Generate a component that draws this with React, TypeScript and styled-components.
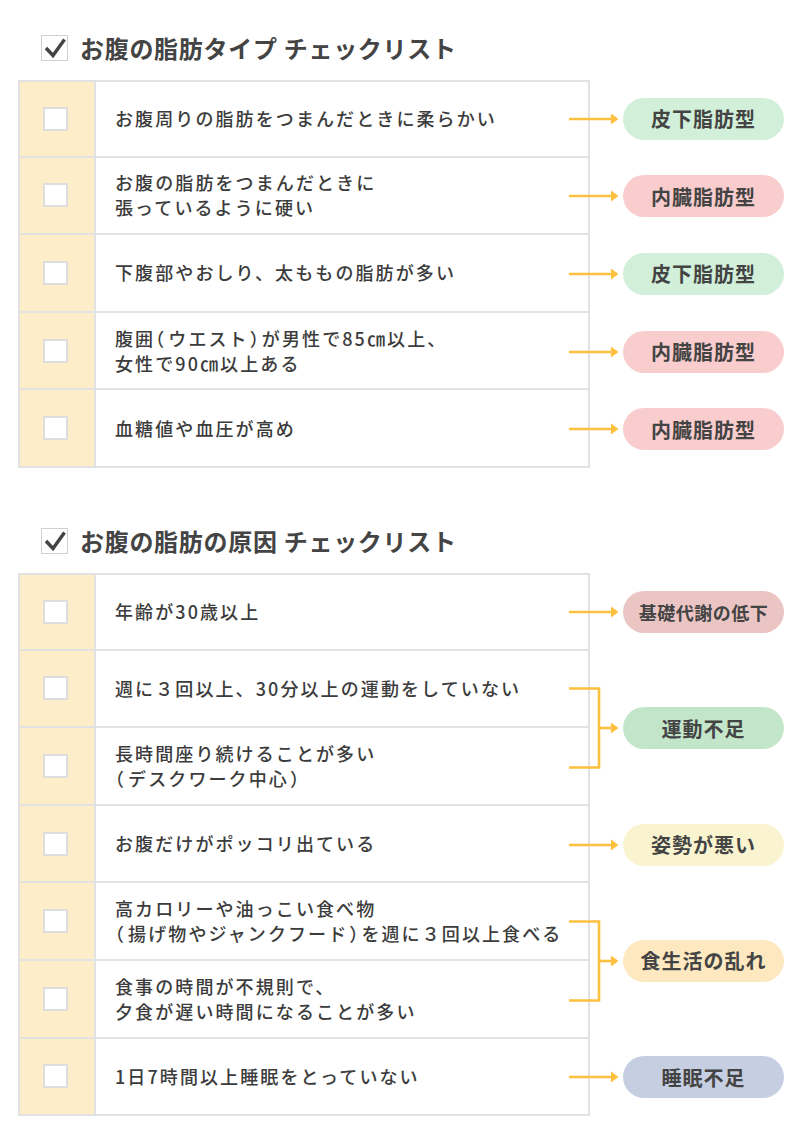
import React from "react";
import styled, { createGlobalStyle } from "styled-components";

const GlobalStyle = createGlobalStyle`
  html, body { margin: 0; padding: 0; background: #ffffff; }
  body { font-family: "Noto Sans CJK JP", "Noto Sans", sans-serif; color: #444444; }
  * { box-sizing: border-box; }
`;

const Page = styled.div`
  width: 800px;
  padding: 35px 0 20px 18px;
`;

const Section = styled.section<{ $gap?: number }>`
  margin-top: ${(p) => p.$gap ?? 0}px;
`;

const TitleRow = styled.h2`
  display: flex;
  align-items: center;
  gap: 12px;
  height: 26px;
  margin: 0 0 19px 23px;
  font-size: 24px;
  font-weight: 700;
  letter-spacing: 0.7px;
  color: #444444;
  line-height: 1;
  white-space: nowrap;
`;

const TitleBox = styled.span`
  display: inline-flex;
  align-items: center;
  justify-content: center;
  width: 27px;
  height: 26px;
  border: 1px solid #d0d0d0;
  background: #ffffff;
  flex: none;
`;

const Grid = styled.div`
  display: grid;
  grid-template-columns: 78px 494px 194px;
  grid-auto-rows: 77.6px;
`;

const CheckCell = styled.div<{ $first?: boolean }>`
  display: flex;
  align-items: center;
  justify-content: center;
  background: #fdedc9;
  border-left: 2px solid #e2e2e2;
  border-right: 2px solid #e2e2e2;
  border-bottom: 2px solid #e2e2e2;
  border-top: ${(p) => (p.$first ? "2px solid #e2e2e2" : "none")};
`;

const Box = styled.span`
  display: block;
  width: 25px;
  height: 24px;
  background: #ffffff;
  border: 2px solid #dedede;
  margin-right: 3px;
`;

const TextCell = styled.div<{ $first?: boolean }>`
  display: flex;
  align-items: center;
  padding-left: 19px;
  border-right: 2px solid #e2e2e2;
  border-bottom: 2px solid #e2e2e2;
  border-top: ${(p) => (p.$first ? "2px solid #e2e2e2" : "none")};
  font-size: 18px;
  font-weight: 500;
  letter-spacing: 2.1px;
  line-height: 25px;
  color: #3c3c3c;
  white-space: nowrap;
`;

const Lines = styled.div`
  display: flex;
  flex-direction: column;
`;

const Paren = styled.span<{ $open?: boolean }>`
  font-feature-settings: "halt" 1;
  margin: ${(p) => (p.$open ? "0 2px 0 0" : "0 1px 0 1px")};
`;

const Annotation = styled.div<{ $span: number }>`
  grid-row: span ${(p) => p.$span};
  grid-column: 3;
  display: flex;
  align-items: center;
  gap: 4px;
  margin-left: -21px;
  position: relative;
  z-index: 1;
`;

const Pill = styled.div<{ $bg: string; $compact?: boolean }>`
  width: 161px;
  height: 42px;
  border-radius: 21px;
  background: ${(p) => p.$bg};
  display: flex;
  align-items: center;
  justify-content: center;
  font-size: ${(p) => (p.$compact ? "18px" : "20px")};
  letter-spacing: ${(p) => (p.$compact ? "0.5px" : "1px")};
  font-weight: 700;
  color: #444444;
  white-space: nowrap;
`;

const ORANGE = "#fdc03f";

const Arrow = () => (
  <svg width="50" height="12" viewBox="0 0 50 12" style={{ flex: "none" }}>
    <line x1="0" y1="6" x2="44" y2="6" stroke={ORANGE} strokeWidth="2.6" />
    <polygon points="42,0.5 49.5,6 42,11.5" fill={ORANGE} />
  </svg>
);

const Bracket = () => (
  <svg width="50" height="82" viewBox="0 0 50 82" style={{ flex: "none" }}>
    <polyline
      points="0,1.5 30,1.5 30,80.5 0,80.5"
      fill="none"
      stroke={ORANGE}
      strokeWidth="2.6"
    />
    <line x1="30" y1="41" x2="44" y2="41" stroke={ORANGE} strokeWidth="2.6" />
    <polygon points="42,35.5 49.5,41 42,46.5" fill={ORANGE} />
  </svg>
);

const TitleCheck = () => (
  <svg width="25" height="24" viewBox="0 0 25 24">
    <polyline
      points="4,12 11,19.5 22.5,3.5"
      fill="none"
      stroke="#444444"
      strokeWidth="3.4"
      strokeLinecap="butt"
      strokeLinejoin="miter"
    />
  </svg>
);

type Tag = { label: string; bg: string; span: number; compact?: boolean };
type Row = { lines: string[]; tag?: Tag };

const renderLine = (line: string) => {
  const parts: React.ReactNode[] = [];
  let buf = "";
  let k = 0;
  for (const ch of line) {
    if (ch === "（" || ch === "）") {
      if (buf) parts.push(buf);
      buf = "";
      parts.push(
        <Paren key={k++} $open={ch === "（"}>
          {ch}
        </Paren>
      );
    } else {
      buf += ch;
    }
  }
  if (buf) parts.push(buf);
  return parts;
};

const GREEN = "#d2f0d9";
const PINK = "#f9cdcd";

const typeRows: Row[] = [
  { lines: ["お腹周りの脂肪をつまんだときに柔らかい"], tag: { label: "皮下脂肪型", bg: GREEN, span: 1 } },
  { lines: ["お腹の脂肪をつまんだときに", "張っているように硬い"], tag: { label: "内臓脂肪型", bg: PINK, span: 1 } },
  { lines: ["下腹部やおしり、太ももの脂肪が多い"], tag: { label: "皮下脂肪型", bg: GREEN, span: 1 } },
  { lines: ["腹囲（ウエスト）が男性で85㎝以上、", "女性で90㎝以上ある"], tag: { label: "内臓脂肪型", bg: PINK, span: 1 } },
  { lines: ["血糖値や血圧が高め"], tag: { label: "内臓脂肪型", bg: PINK, span: 1 } },
];

const causeRows: Row[] = [
  { lines: ["年齢が30歳以上"], tag: { label: "基礎代謝の低下", bg: "#ebc4c4", span: 1, compact: true } },
  { lines: ["週に３回以上、30分以上の運動をしていない"], tag: { label: "運動不足", bg: "#c3e6ca", span: 2 } },
  { lines: ["長時間座り続けることが多い", "（デスクワーク中心）"] },
  { lines: ["お腹だけがポッコリ出ている"], tag: { label: "姿勢が悪い", bg: "#f9f4cf", span: 1 } },
  { lines: ["高カロリーや油っこい食べ物", "（揚げ物やジャンクフード）を週に３回以上食べる"], tag: { label: "食生活の乱れ", bg: "#fde8c0", span: 2 } },
  { lines: ["食事の時間が不規則で、", "夕食が遅い時間になることが多い"] },
  { lines: ["1日7時間以上睡眠をとっていない"], tag: { label: "睡眠不足", bg: "#c6cee2", span: 1 } },
];

const Checklist = ({ title, rows, gap }: { title: string; rows: Row[]; gap?: number }) => (
  <Section $gap={gap}>
    <TitleRow>
      <TitleBox>
        <TitleCheck />
      </TitleBox>
      {title}
    </TitleRow>
    <Grid>
      {rows.map((r, i) => (
        <React.Fragment key={i}>
          <CheckCell $first={i === 0}>
            <Box />
          </CheckCell>
          <TextCell $first={i === 0}>
            <Lines>
              {r.lines.map((l, j) => (
                <span key={j}>{renderLine(l)}</span>
              ))}
            </Lines>
          </TextCell>
          {r.tag && (
            <Annotation $span={r.tag.span}>
              {r.tag.span > 1 ? <Bracket /> : <Arrow />}
              <Pill $bg={r.tag.bg} $compact={r.tag.compact}>
                {r.tag.label}
              </Pill>
            </Annotation>
          )}
        </React.Fragment>
      ))}
    </Grid>
  </Section>
);

export default function App() {
  return (
    <>
      <GlobalStyle />
      <Page>
        <Checklist title="お腹の脂肪タイプ チェックリスト" rows={typeRows} />
        <Checklist title="お腹の脂肪の原因 チェックリスト" rows={causeRows} gap={60} />
      </Page>
    </>
  );
}
